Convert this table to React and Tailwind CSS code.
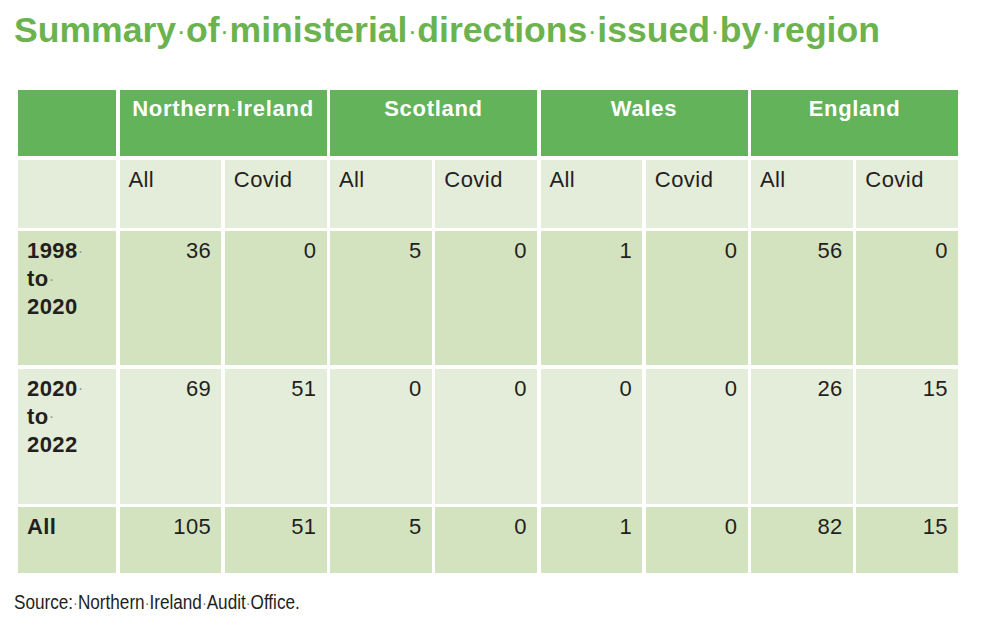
const regions = ['Northern·Ireland', 'Scotland', 'Wales', 'England']

const rows = [
  { label: ['1998', 'to', '2020'], values: [36, 0, 5, 0, 1, 0, 56, 0], bg: 'bg-[#d3e3c0]' },
  { label: ['2020', 'to', '2022'], values: [69, 51, 0, 0, 0, 0, 26, 15], bg: 'bg-[#e3edd9]' },
  { label: ['All'], values: [105, 51, 5, 0, 1, 0, 82, 15], bg: 'bg-[#d3e3c0]' },
]

// formatting-mark dot that takes the width of a space
function Dot({ className = 'text-[#9a9a9a]' }) {
  return (
    <span className={`inline-block w-[0.37em] text-[0.75em] leading-none text-center align-[0.07em] font-normal ${className}`}>
      ·
    </span>
  )
}

function Dotted({ text, dotClass }) {
  const words = text.split('·')
  return words.map((w, i) => (
    <span key={i}>
      {w}
      {i < words.length - 1 && <Dot className={dotClass} />}
    </span>
  ))
}

export default function App() {
  return (
    <div className="w-[990px] h-[628px] bg-white font-['Liberation_Sans',Arial,sans-serif] text-[#231f20] overflow-hidden">
      <h1 className="pl-[14px] pt-[8px] text-[35.6px] leading-[44px] font-bold text-[#6cb34f] whitespace-nowrap">
        <Dotted text="Summary·of·ministerial·directions·issued·by·region" dotClass="text-[#6cb34f]" />
      </h1>

      <div className="ml-[18px] mt-[38px] w-[940px] grid grid-cols-[98px_repeat(8,1fr)] grid-rows-[66px_68px_134px_135px_66px] gap-[3.5px] text-[22px] leading-[28px]">
        {/* Region header */}
        <div className="bg-[#63b35b]" />
        {regions.map((r) => (
          <div key={r} className="col-span-2 bg-[#63b35b] pt-[5px] text-center font-bold text-white tracking-[0.7px]">
            <Dotted text={r} dotClass="text-white" />
          </div>
        ))}

        {/* Sub header */}
        <div className="bg-[#e3edd9]" />
        {regions.flatMap((r) => [
          <div key={r + 'a'} className="bg-[#e3edd9] pt-[6px] pl-[9px] tracking-[0.4px]">All</div>,
          <div key={r + 'c'} className="bg-[#e3edd9] pt-[6px] pl-[9px] tracking-[0.5px]">Covid</div>,
        ])}

        {/* Data rows */}
        {rows.map((row, ri) => [
          <div key={'l' + ri} className={`${row.bg} pt-[6px] pl-[9px] font-bold tracking-[0.4px]`}>
            {row.label.map((l, li) => (
              <div key={li}>
                {l}
                {li < row.label.length - 1 && <Dot />}
              </div>
            ))}
          </div>,
          ...row.values.map((v, vi) => (
            <div key={ri + '-' + vi} className={`${row.bg} pt-[6px] pr-[10px] text-right tracking-[0.4px]`}>
              {v}
            </div>
          )),
        ])}
      </div>

      <p className="mt-[18px] pl-[14px] text-[19.5px] leading-[22px]">
        <span className="inline-block origin-left scale-x-[0.88] whitespace-nowrap">
          <Dotted text="Source:·Northern·Ireland·Audit·Office." dotClass="text-[#666]" />
        </span>
      </p>
    </div>
  )
}
